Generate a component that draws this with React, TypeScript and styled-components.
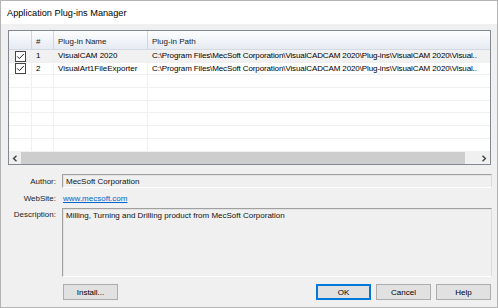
import React from 'react';
import styled, { createGlobalStyle } from 'styled-components';

const Global = createGlobalStyle`
  html, body { margin: 0; padding: 0; background: #ffffff; }
  body { font-family: "Liberation Sans", Arial, sans-serif; font-size: 8px; color: #000; }
`;

const rows = [
  { id: 1, name: 'VisualCAM 2020', path: 'C:\\Program Files\\MecSoft Corporation\\VisualCADCAM 2020\\Plug-ins\\VisualCAM 2020\\Visual..' },
  { id: 2, name: 'VisualArt1FileExporter', path: 'C:\\Program Files\\MecSoft Corporation\\VisualCADCAM 2020\\Plug-ins\\VisualCAM 2020\\Visual..' },
];

const Check = () => (
  <svg width="11" height="11" viewBox="0 0 11 11">
    <rect x="0.5" y="0.5" width="10" height="10" fill="#fff" stroke="#444" />
    <path d="M2.2 5.4 L4.4 7.6 L8.8 3" fill="none" stroke="#222" strokeWidth="1" />
  </svg>
);

const Chevron = ({ dir }: { dir: 'left' | 'right' }) => (
  <svg width="6" height="7" viewBox="0 0 6 7">
    <path d={dir === 'left' ? 'M4.5 0.8 L1.6 3.5 L4.5 6.2' : 'M1.5 0.8 L4.4 3.5 L1.5 6.2'} fill="none" stroke="#404040" strokeWidth="1.4" />
  </svg>
);

const App = () => {
  const blanks = Array.from({ length: 6 });
  return (
    <>
      <Global />
      <Window>
        <TitleBar>Application Plug-ins Manager</TitleBar>
        <Body>
          <Table>
            <HeaderRow>
              <HeadCell />
              <HeadCell>#</HeadCell>
              <HeadCell>Plug-in Name</HeadCell>
              <HeadCell $last>Plug-in Path</HeadCell>
            </HeaderRow>
            {rows.map((r, i) => (
              <Row key={r.id} $shaded={i === 0}>
                <Cell $center><Check /></Cell>
                <Cell>{r.id}</Cell>
                <Cell>{r.name}</Cell>
                <Cell $last>{r.path}</Cell>
              </Row>
            ))}
            {blanks.map((_, i) => (
              <Row key={'b' + i}>
                <Cell />
                <Cell />
                <Cell />
                <Cell $last />
              </Row>
            ))}
            <Spacer />
            <ScrollBar>
              <Arrow><Chevron dir="left" /></Arrow>
              <Thumb />
              <Track />
              <Arrow><Chevron dir="right" /></Arrow>
            </ScrollBar>
          </Table>

          <Form>
            <Label>Author:</Label>
            <Field>MecSoft Corporation</Field>
            <Label>WebSite:</Label>
            <Link href="#">www.mecsoft.com</Link>
            <Label $top>Description:</Label>
            <Field $tall>Milling, Turning and Drilling product from MecSoft Corporation</Field>
          </Form>

          <Buttons>
            <Button>Install...</Button>
            <Grow />
            <Button $default>OK</Button>
            <Button>Cancel</Button>
            <Button>Help</Button>
          </Buttons>
        </Body>
      </Window>
    </>
  );
};

export default App;

const Window = styled.div`
  width: 498px;
  height: 308px;
  box-sizing: border-box;
  border: 1px solid #b4b4b4;
  display: flex;
  flex-direction: column;
  background: #f0f0f0;
  overflow: hidden;
`;

const TitleBar = styled.div`
  height: 23px;
  background: #ffffff;
  padding-left: 6px;
  display: flex;
  align-items: center;
  font-size: 9.2px;
  color: #000;
`;

const Body = styled.div`
  flex: 1;
  display: flex;
  flex-direction: column;
  padding: 6px 6px 0 7px;
`;

const Table = styled.div`
  height: 135px;
  width: 483px;
  box-sizing: border-box;
  border: 1px solid #828790;
  background: #ffffff;
  display: flex;
  flex-direction: column;
`;

const cols = '23px 22px 94px 1fr';

const HeaderRow = styled.div`
  display: grid;
  grid-template-columns: ${cols};
  height: 19px;
  flex-shrink: 0;
  background: linear-gradient(#fdfdfe, #f0f3f8 55%, #e6ebf2);
  border-bottom: 1px solid #d5dae2;
  box-sizing: border-box;
`;

const HeadCell = styled.div<{ $last?: boolean }>`
  border-right: ${p => (p.$last ? 'none' : '1px solid #d5d5d5')};
  padding-left: 4px;
  display: flex;
  align-items: center;
  padding-top: 3px;
  color: #1a1a1a;
`;

const Row = styled.div<{ $shaded?: boolean }>`
  display: grid;
  grid-template-columns: ${cols};
  height: 12.7px;
  flex-shrink: 0;
  background: ${p => (p.$shaded ? '#f1f1f1' : '#ffffff')};
  border-bottom: 1px solid #f0f0f0;
  box-sizing: border-box;
`;

const Cell = styled.div<{ $last?: boolean; $center?: boolean }>`
  border-right: ${p => (p.$last ? 'none' : '1px solid #f0f0f0')};
  padding-left: ${p => (p.$center ? '0' : '4px')};
  display: ${p => (p.$center ? 'flex' : 'block')};
  align-items: center;
  justify-content: center;
  white-space: nowrap;
  min-width: 0;
  line-height: 12px;
  letter-spacing: ${p => (p.$last ? '-0.12px' : '0')};
`;

const Spacer = styled.div`
  flex: 1;
`;

const ScrollBar = styled.div`
  height: 12px;
  flex-shrink: 0;
  display: flex;
  background: #f0f0f0;
`;

const Arrow = styled.div`
  width: 12px;
  display: flex;
  align-items: center;
  justify-content: center;
`;

const Thumb = styled.div`
  width: 444px;
  background: #cdcdcd;
`;

const Track = styled.div`
  flex: 1;
`;

const Form = styled.div`
  display: grid;
  grid-template-columns: 48px 430px;
  column-gap: 6px;
  margin-top: 9px;
  row-gap: 3px;
  align-items: center;
`;

const Label = styled.div<{ $top?: boolean }>`
  text-align: right;
  color: #222;
  align-self: ${p => (p.$top ? 'start' : 'center')};
  padding-top: ${p => (p.$top ? '2px' : '0')};
`;

const Field = styled.div<{ $tall?: boolean }>`
  height: ${p => (p.$tall ? '69px' : '14px')};
  box-sizing: border-box;
  border-top: 1px solid #a0a0a0;
  border-left: 1px solid #a0a0a0;
  border-right: 1px solid #dcdcdc;
  border-bottom: 1px solid #ffffff;
  box-shadow: inset 1px 1px 0 #e3e3e3;
  padding: ${p => (p.$tall ? '2px 3px' : '0 3px')};
  display: flex;
  align-items: ${p => (p.$tall ? 'flex-start' : 'center')};
  color: #111;
`;

const Link = styled.a`
  color: #0066cc;
  text-decoration: underline;
  height: 14px;
  display: flex;
  align-items: center;
  padding-left: 1px;
  width: max-content;
`;

const Buttons = styled.div`
  display: flex;
  gap: 5px;
  margin-top: 7px;
  padding-left: 55px;
`;

const Grow = styled.div`
  flex: 1;
`;

const Button = styled.button<{ $default?: boolean }>`
  width: 55px;
  height: 16px;
  box-sizing: border-box;
  background: #e1e1e1;
  border: 1px solid ${p => (p.$default ? '#0078d7' : '#adadad')};
  box-shadow: ${p => (p.$default ? 'inset 0 0 0 1px #0078d7' : 'none')};
  font-family: "Liberation Sans", Arial, sans-serif;
  font-size: 8px;
  color: #000;
  padding: 0;
  border-radius: 0;
`;
